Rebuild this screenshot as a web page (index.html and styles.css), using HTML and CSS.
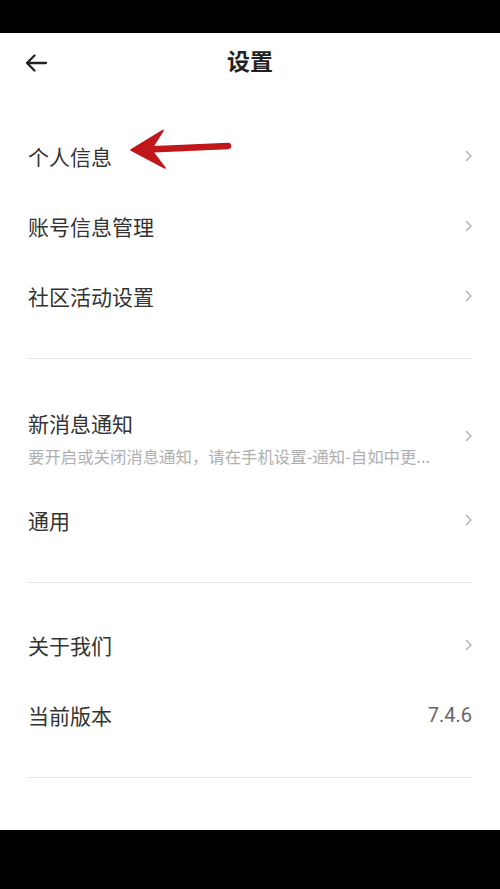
FILE: index.html
```html
<!DOCTYPE html>
<html lang="zh-CN">
<head>
<meta charset="utf-8">
<title>设置</title>
<link rel="stylesheet" href="styles.css">
</head>
<body>
<div class="screen">
  <div class="statusbar"></div>
  <main class="page">
    <header class="topbar">
      <svg class="back" width="24" height="20" viewBox="0 0 24 20" aria-hidden="true">
        <path d="M22 10H3M10.5 2.5L3 10l7.5 7.5" fill="none" stroke="#222" stroke-width="2.3" stroke-linecap="round" stroke-linejoin="round"/>
      </svg>
      <h1 class="title">设置</h1>
    </header>

    <section class="group">
      <div class="row"><span class="label">个人信息</span><svg class="chev" width="8" height="12" viewBox="0 0 8 12"><path d="M1.5 1.5L6 6l-4.5 4.5" fill="none" stroke="#b5b5b5" stroke-width="1.5" stroke-linecap="round" stroke-linejoin="round"/></svg></div>
      <div class="row"><span class="label">账号信息管理</span><svg class="chev" width="8" height="12" viewBox="0 0 8 12"><path d="M1.5 1.5L6 6l-4.5 4.5" fill="none" stroke="#b5b5b5" stroke-width="1.5" stroke-linecap="round" stroke-linejoin="round"/></svg></div>
      <div class="row"><span class="label">社区活动设置</span><svg class="chev" width="8" height="12" viewBox="0 0 8 12"><path d="M1.5 1.5L6 6l-4.5 4.5" fill="none" stroke="#b5b5b5" stroke-width="1.5" stroke-linecap="round" stroke-linejoin="round"/></svg></div>
    </section>
    <hr class="divider">

    <section class="group">
      <div class="row row-tall">
        <div class="stack">
          <span class="label">新消息通知</span>
          <span class="sub">要开启或关闭消息通知，请在手机设置-通知-自如中更...</span>
        </div>
        <svg class="chev" width="8" height="12" viewBox="0 0 8 12"><path d="M1.5 1.5L6 6l-4.5 4.5" fill="none" stroke="#b5b5b5" stroke-width="1.5" stroke-linecap="round" stroke-linejoin="round"/></svg>
      </div>
      <div class="row"><span class="label">通用</span><svg class="chev" width="8" height="12" viewBox="0 0 8 12"><path d="M1.5 1.5L6 6l-4.5 4.5" fill="none" stroke="#b5b5b5" stroke-width="1.5" stroke-linecap="round" stroke-linejoin="round"/></svg></div>
    </section>
    <hr class="divider">

    <section class="group">
      <div class="row"><span class="label">关于我们</span><svg class="chev" width="8" height="12" viewBox="0 0 8 12"><path d="M1.5 1.5L6 6l-4.5 4.5" fill="none" stroke="#b5b5b5" stroke-width="1.5" stroke-linecap="round" stroke-linejoin="round"/></svg></div>
      <div class="row"><span class="label">当前版本</span><span class="value">7.4.6</span></div>
    </section>
    <hr class="divider">

    <svg class="annot" width="110" height="46" viewBox="0 0 110 46" aria-hidden="true">
      <path d="M22 24.5L102 21" stroke="#c0171b" stroke-width="6.5" stroke-linecap="round"/>
      <path d="M5 25L37 5.5L25 24.5L39 43Z" fill="#c0171b" stroke="#c0171b" stroke-width="1.5" stroke-linejoin="round"/>
    </svg>
  </main>
  <div class="navbar"></div>
</div>
</body>
</html>
```

FILE: styles.css
```css
html, body {
  margin: 0;
  padding: 0;
  background: #000;
}
body {
  font-family: "Noto Sans CJK SC", "Noto Sans", "Liberation Sans", sans-serif;
  color: #333;
}
.screen {
  width: 500px;
  height: 889px;
  display: flex;
  flex-direction: column;
}
.statusbar {
  height: 33px;
  background: #000;
  flex: none;
}
.navbar {
  height: 59px;
  background: #000;
  flex: none;
}
.page {
  flex: 1;
  background: #fff;
  position: relative;
  padding: 0 28px;
}
.topbar {
  height: 61px;
  display: flex;
  align-items: center;
  justify-content: center;
  position: relative;
}
.back {
  position: absolute;
  left: -4px;
  top: 20px;
}
.title {
  margin: 0;
  font-size: 23px;
  font-weight: 700;
  color: #222;
  line-height: 1;
  padding-bottom: 6px;
}
.group {
  padding: 27px 0;
}
.row {
  height: 70px;
  display: flex;
  align-items: center;
  justify-content: space-between;
}
.row-tall {
  height: 99px;
  padding-top: 1px;
  box-sizing: border-box;
}
.stack {
  display: flex;
  flex-direction: column;
  gap: 9px;
  padding-top: 4px;
}
.label {
  font-size: 21px;
  line-height: 26px;
  color: #333;
}
.sub {
  font-size: 16.4px;
  line-height: 22px;
  color: #b0b0b0;
  white-space: nowrap;
}
.chev {
  flex: none;
  margin-right: -1px;
}
.value {
  font-size: 20px;
  color: #666;
  font-family: "Roboto", "Noto Sans", sans-serif;
}
.divider {
  margin: 0;
  border: 0;
  height: 1px;
  background: #e6e6e6;
}
.annot {
  position: absolute;
  left: 126px;
  top: 92px;
}
```
